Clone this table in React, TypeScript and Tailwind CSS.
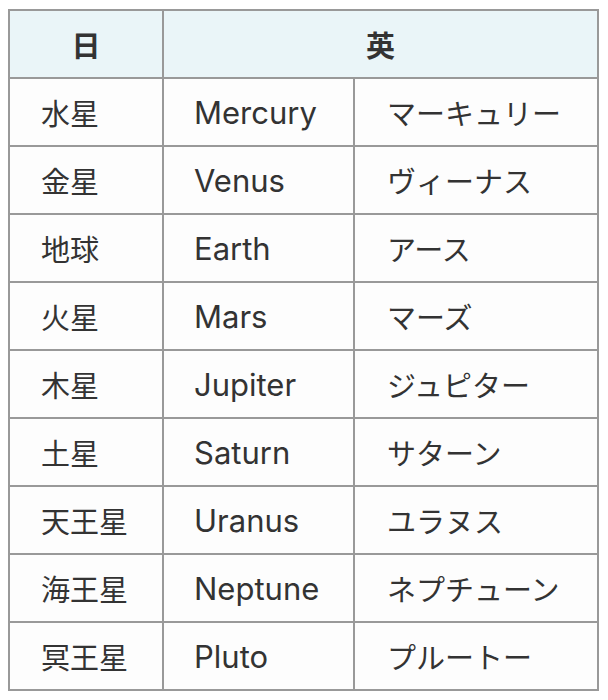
import React from 'react';

const rows: [string, string, string][] = [
  ['水星', 'Mercury', 'マーキュリー'],
  ['金星', 'Venus', 'ヴィーナス'],
  ['地球', 'Earth', 'アース'],
  ['火星', 'Mars', 'マーズ'],
  ['木星', 'Jupiter', 'ジュピター'],
  ['土星', 'Saturn', 'サターン'],
  ['天王星', 'Uranus', 'ユラヌス'],
  ['海王星', 'Neptune', 'ネプチューン'],
  ['冥王星', 'Pluto', 'プルートー'],
];

const App: React.FC = () => {
  return (
    <div className="bg-white w-[608px] h-[700px] pt-[9px] pl-2 font-['Noto_Sans_CJK_JP','Noto_Sans',sans-serif] text-[29px] leading-none text-[#333]">
      <table className="border-collapse table-fixed w-[589px] border-2 border-[#999]">
        <colgroup>
          <col className="w-[154px]" />
          <col className="w-[191px]" />
          <col className="w-[244px]" />
        </colgroup>
        <thead>
          <tr className="bg-[#eaf5f8] h-[68px]">
            <th className="border-2 border-[#999] font-bold text-center p-0">日</th>
            <th colSpan={2} className="border-2 border-[#999] font-bold text-center p-0">英</th>
          </tr>
        </thead>
        <tbody>
          {rows.map(([ja, en, kana]) => (
            <tr key={en} className="h-[68px] bg-[#fdfdfd]">
              <td className="border-2 border-[#999] pl-[31px] pr-0 py-0 whitespace-nowrap">{ja}</td>
              <td className="border-2 border-[#999] pl-[30px] pr-0 py-0 font-['Inter','Noto_Sans',sans-serif] text-[31px]">{en}</td>
              <td className="border-2 border-[#999] pl-[32px] pr-0 py-0 whitespace-nowrap">{kana}</td>
            </tr>
          ))}
        </tbody>
      </table>
    </div>
  );
};

export default App;
